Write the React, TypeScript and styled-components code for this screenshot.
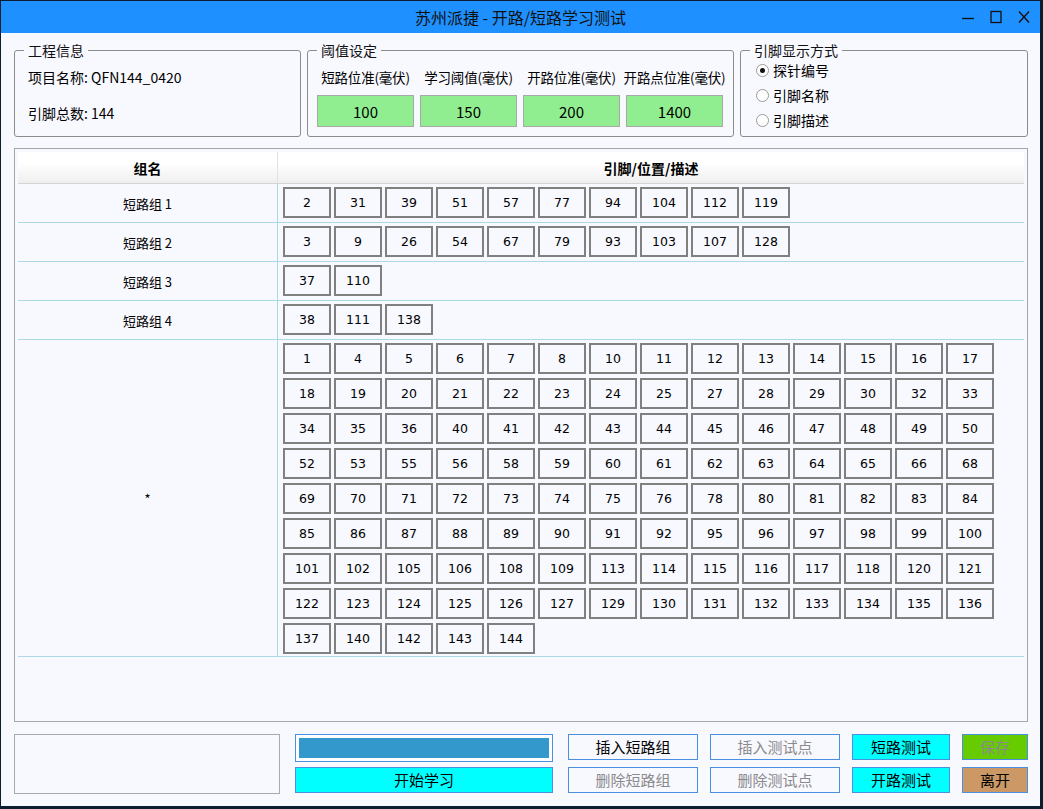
import React from "react";
import styled, { createGlobalStyle } from "styled-components";

const GlobalStyle = createGlobalStyle`
  html, body {
    margin: 0;
    padding: 0;
    background: #0b1d2e;
  }
  body {
    font-family: "Noto Sans CJK SC", "Noto Sans", sans-serif;
    color: #000;
  }
`;

const FONT = `"Noto Sans CJK SC", "Noto Sans", sans-serif`;
const NUM_FONT = `"DejaVu Sans", Verdana, sans-serif`;

const Window = styled.div`
  margin: 1px 0 0 1px;
  width: 1039px;
  height: 805px;
  background: #f8f8ff;
  display: flex;
  flex-direction: column;
`;

const TitleBar = styled.div`
  height: 32px;
  background: #1e90ff;
  display: flex;
  align-items: center;
  justify-content: center;
  position: relative;
  font-family: ${FONT};
  font-size: 16px;
  line-height: 32px;
  color: #111;
`;

const TitleControls = styled.div`
  position: absolute;
  right: 9px;
  top: 0;
  height: 32px;
  display: flex;
  align-items: center;
  gap: 14px;
`;

const Body = styled.div`
  flex: 1;
  display: flex;
  flex-direction: column;
  padding: 7px 12px 11px 13px;
`;

const GroupRow = styled.div`
  display: flex;
  gap: 6px;
  height: 97px;
`;

const GroupBox = styled.fieldset<{ $w: number }>`
  box-sizing: border-box;
  width: ${(p) => p.$w}px;
  height: 97px;
  margin: 0;
  padding: 0 9px;
  border: 1px solid #8c8c8c;
  border-radius: 3px;
  min-width: 0;
`;

const Legend = styled.legend`
  padding: 0 4px;
  font-family: ${FONT};
  font-size: 14px;
  line-height: 20px;
  color: #111;
`;

const InfoList = styled.div`
  display: flex;
  flex-direction: column;
  gap: 16px;
  padding: 7px 0 0 4px;
  font-family: ${FONT};
  font-size: 14px;
  line-height: 20px;
`;

const Thresholds = styled.div`
  display: flex;
  gap: 6px;
  padding-top: 7px;
`;

const ThresholdCol = styled.div`
  width: 97px;
  display: flex;
  flex-direction: column;
  align-items: center;
  gap: 8px;
`;

const ThresholdLabel = styled.div`
  font-family: ${FONT};
  font-size: 13.5px;
  line-height: 20px;
  white-space: nowrap;
  letter-spacing: -0.2px;
`;

const ThresholdValue = styled.div`
  box-sizing: border-box;
  width: 97px;
  height: 32px;
  background: #90ee90;
  border: 1px solid #a8a8a8;
  display: flex;
  align-items: center;
  justify-content: center;
  font-family: ${FONT};
  font-size: 15px;
`;

const RadioList = styled.div`
  display: flex;
  flex-direction: column;
  gap: 5px;
  padding-left: 6px;
`;

const RadioRow = styled.label`
  display: flex;
  align-items: center;
  gap: 4px;
  height: 20px;
  font-family: ${FONT};
  font-size: 14px;
`;

const RadioDot = styled.span<{ $on?: boolean }>`
  box-sizing: border-box;
  width: 13px;
  height: 13px;
  border-radius: 50%;
  border: 1px solid #9a9a9a;
  background: #fff;
  display: flex;
  align-items: center;
  justify-content: center;
  &::after {
    content: "";
    width: 5px;
    height: 5px;
    border-radius: 50%;
    background: ${(p) => (p.$on ? "#111" : "transparent")};
  }
`;

const Table = styled.div`
  box-sizing: border-box;
  margin-top: 11px;
  height: 574px;
  border: 1px solid #a6a6a6;
  padding: 3px;
  display: flex;
  flex-direction: column;
`;

const HeaderRow = styled.div`
  display: flex;
  height: 31px;
  background: linear-gradient(#ffffff 0%, #ffffff 35%, #efefef 100%);
  border-bottom: 1px solid #d4d4d4;
  font-family: ${FONT};
  font-size: 14px;
  font-weight: bold;
`;

const HeaderCell = styled.div<{ $first?: boolean }>`
  display: flex;
  align-items: center;
  justify-content: center;
  ${(p) => (p.$first ? "width: 259px; border-right: 1px solid #e2e2e2;" : "flex: 1;")}
`;

const Row = styled.div`
  display: flex;
  border-bottom: 1px solid #add8e6;
`;

const GroupName = styled.div`
  width: 259px;
  border-right: 1px solid #add8e6;
  display: flex;
  align-items: center;
  justify-content: center;
  font-family: ${FONT};
  font-size: 13px;
`;

const Pins = styled.div<{ $bottom: number }>`
  flex: 1;
  display: flex;
  flex-wrap: wrap;
  align-content: flex-start;
  gap: 4px 3px;
  padding: 3px 5px ${(p) => p.$bottom}px 5px;
`;

const Pin = styled.div`
  box-sizing: border-box;
  width: 48px;
  height: 31px;
  border: 2px solid #808080;
  display: flex;
  align-items: center;
  justify-content: center;
  font-family: ${NUM_FONT};
  font-size: 12.5px;
  color: #000;
`;

const BottomBar = styled.div`
  display: flex;
  margin-top: 12px;
  height: 60px;
`;

const MessageBox = styled.div`
  box-sizing: border-box;
  width: 266px;
  height: 60px;
  border: 1px solid #a9a9a9;
  margin-right: 15px;
`;

const ButtonCol = styled.div<{ $w: number; $gap: number }>`
  width: ${(p) => p.$w}px;
  margin-right: ${(p) => p.$gap}px;
  display: flex;
  flex-direction: column;
  justify-content: space-between;
  height: 59px;
`;

const Progress = styled.div`
  box-sizing: border-box;
  height: 28px;
  border: 1px solid #4a8fe0;
  padding: 3px;
  background: #fff;
`;

const ProgressFill = styled.div`
  height: 100%;
  background: #3399cc;
`;

const Button = styled.div<{ $bg?: string; $disabled?: boolean }>`
  box-sizing: border-box;
  height: 26px;
  border: 1px solid #4a8fe0;
  background: ${(p) => p.$bg || "#f8f8ff"};
  color: ${(p) => (p.$disabled ? "#8a8a8a" : "#000")};
  display: flex;
  align-items: center;
  justify-content: center;
  font-family: ${FONT};
  font-size: 15px;
  line-height: 24px;
`;

const groups: { name: string; pins: number[] }[] = [
  { name: "短路组 1", pins: [2, 31, 39, 51, 57, 77, 94, 104, 112, 119] },
  { name: "短路组 2", pins: [3, 9, 26, 54, 67, 79, 93, 103, 107, 128] },
  { name: "短路组 3", pins: [37, 110] },
  { name: "短路组 4", pins: [38, 111, 138] },
  {
    name: "*",
    pins: [
      1, 4, 5, 6, 7, 8, 10, 11, 12, 13, 14, 15, 16, 17,
      18, 19, 20, 21, 22, 23, 24, 25, 27, 28, 29, 30, 32, 33,
      34, 35, 36, 40, 41, 42, 43, 44, 45, 46, 47, 48, 49, 50,
      52, 53, 55, 56, 58, 59, 60, 61, 62, 63, 64, 65, 66, 68,
      69, 70, 71, 72, 73, 74, 75, 76, 78, 80, 81, 82, 83, 84,
      85, 86, 87, 88, 89, 90, 91, 92, 95, 96, 97, 98, 99, 100,
      101, 102, 105, 106, 108, 109, 113, 114, 115, 116, 117, 118, 120, 121,
      122, 123, 124, 125, 126, 127, 129, 130, 131, 132, 133, 134, 135, 136,
      137, 140, 142, 143, 144,
    ],
  },
];

const thresholds = [
  { label: "短路位准(毫伏)", value: "100" },
  { label: "学习阈值(毫伏)", value: "150" },
  { label: "开路位准(毫伏)", value: "200" },
  { label: "开路点位准(毫伏)", value: "1400" },
];

const WindowControls = () => (
  <TitleControls>
    <svg width="14" height="14" viewBox="0 0 14 14">
      <path d="M1 8.5h12" stroke="#111" strokeWidth="1.3" />
    </svg>
    <svg width="14" height="14" viewBox="0 0 14 14">
      <rect x="2" y="1.5" width="10" height="11" fill="none" stroke="#111" strokeWidth="1.3" />
    </svg>
    <svg width="14" height="14" viewBox="0 0 14 14">
      <path d="M2 1.5l10 11M12 1.5l-10 11" stroke="#111" strokeWidth="1.4" />
    </svg>
  </TitleControls>
);

export default function App() {
  return (
    <>
      <GlobalStyle />
      <Window>
        <TitleBar>
          苏州派捷 - 开路/短路学习测试
          <WindowControls />
        </TitleBar>
        <Body>
          <GroupRow>
            <GroupBox $w={287}>
              <Legend>工程信息</Legend>
              <InfoList>
                <div>项目名称: QFN144_0420</div>
                <div>引脚总数: 144</div>
              </InfoList>
            </GroupBox>
            <GroupBox $w={427}>
              <Legend>阈值设定</Legend>
              <Thresholds>
                {thresholds.map((t) => (
                  <ThresholdCol key={t.label}>
                    <ThresholdLabel>{t.label}</ThresholdLabel>
                    <ThresholdValue>{t.value}</ThresholdValue>
                  </ThresholdCol>
                ))}
              </Thresholds>
            </GroupBox>
            <GroupBox $w={288}>
              <Legend>引脚显示方式</Legend>
              <RadioList>
                <RadioRow>
                  <RadioDot $on />
                  探针编号
                </RadioRow>
                <RadioRow>
                  <RadioDot />
                  引脚名称
                </RadioRow>
                <RadioRow>
                  <RadioDot />
                  引脚描述
                </RadioRow>
              </RadioList>
            </GroupBox>
          </GroupRow>

          <Table>
            <HeaderRow>
              <HeaderCell $first>组名</HeaderCell>
              <HeaderCell>引脚/位置/描述</HeaderCell>
            </HeaderRow>
            {groups.map((g, i) => (
              <Row key={g.name}>
                <GroupName>{g.name}</GroupName>
                <Pins $bottom={i === groups.length - 1 ? 2 : 4}>
                  {g.pins.map((p) => (
                    <Pin key={p}>{p}</Pin>
                  ))}
                </Pins>
              </Row>
            ))}
          </Table>

          <BottomBar>
            <MessageBox />
            <ButtonCol $w={258} $gap={15}>
              <Progress>
                <ProgressFill />
              </Progress>
              <Button $bg="#00ffff">开始学习</Button>
            </ButtonCol>
            <ButtonCol $w={130} $gap={12}>
              <Button>插入短路组</Button>
              <Button $disabled>删除短路组</Button>
            </ButtonCol>
            <ButtonCol $w={130} $gap={12}>
              <Button $disabled>插入测试点</Button>
              <Button $disabled>删除测试点</Button>
            </ButtonCol>
            <ButtonCol $w={98} $gap={12}>
              <Button $bg="#00ffff">短路测试</Button>
              <Button $bg="#00ffff">开路测试</Button>
            </ButtonCol>
            <ButtonCol $w={66} $gap={0}>
              <Button $bg="#66cc00" $disabled>保存</Button>
              <Button $bg="#cc9966">离开</Button>
            </ButtonCol>
          </BottomBar>
        </Body>
      </Window>
    </>
  );
}
